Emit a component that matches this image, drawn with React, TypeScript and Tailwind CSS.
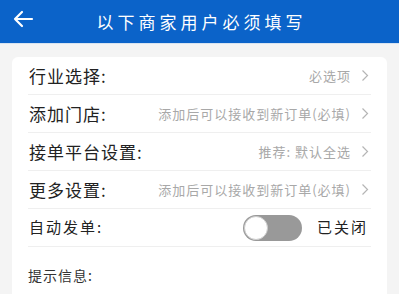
const font = { fontFamily: '"Noto Sans CJK SC", "Noto Sans", sans-serif' };

type Row = { label: string; hint: string };

const rows: Row[] = [
  { label: "行业选择:", hint: "必选项" },
  { label: "添加门店:", hint: "添加后可以接收到新订单(必填)" },
  { label: "接单平台设置:", hint: "推荐: 默认全选" },
  { label: "更多设置:", hint: "添加后可以接收到新订单(必填)" },
];

function Chevron() {
  return (
    <svg width="8" height="13" viewBox="0 0 8 13" className="ml-[10px] mr-[2px] shrink-0">
      <path d="M1.5 1.5 L6.5 6.5 L1.5 11.5" fill="none" stroke="#b5b5b5" strokeWidth="1.2" />
    </svg>
  );
}

export default function App() {
  return (
    <div className="h-[294px] w-[399px] overflow-hidden bg-[#f4f4f4]" style={font}>
      <header className="relative flex h-[43px] items-center justify-center bg-[#0b63c9]">
        <svg width="22" height="18" viewBox="0 0 22 18" className="absolute left-[12px] top-[10px]">
          <path d="M20 9 H3 M10 2 L3 9 L10 16" fill="none" stroke="#fff" strokeWidth="2.2" strokeLinecap="round" strokeLinejoin="round" />
        </svg>
        <h1 className="pl-[4px] text-[17px] tracking-[4px] text-white">以下商家用户必须填写</h1>
      </header>
      <div className="h-[1px] bg-[#d7e3f0]" />
      <div className="mx-[12px] mt-[13px] rounded-[6px] bg-white px-[16px]">
        {rows.map((r) => (
          <div key={r.label} className="flex h-[38px] items-center border-b border-[#efefef]">
            <span className="flex-1 pl-[1px] text-[17px] tracking-[1px] text-[#222]">{r.label}</span>
            <span className="text-[13px] tracking-[1px] text-[#a8a8a8]">{r.hint}</span>
            <Chevron />
          </div>
        ))}
        <div className="flex h-[38px] items-center border-b border-[#efefef]">
          <span className="flex-1 pl-[1px] text-[15px] tracking-[2px] text-[#222]">自动发单:</span>
          <div className="relative h-[26px] w-[59px] rounded-full bg-[#999]">
            <div className="absolute left-[1px] top-[1px] h-[24px] w-[24px] rounded-full border border-[#ccc] bg-white" />
          </div>
          <span className="ml-[15px] mr-[3px] text-[15px] tracking-[2px] text-[#222]">已关闭</span>
        </div>
        <div className="pb-[14px] pt-[18px] text-[14px] tracking-[1px] text-[#333]">提示信息:</div>
      </div>
    </div>
  );
}
